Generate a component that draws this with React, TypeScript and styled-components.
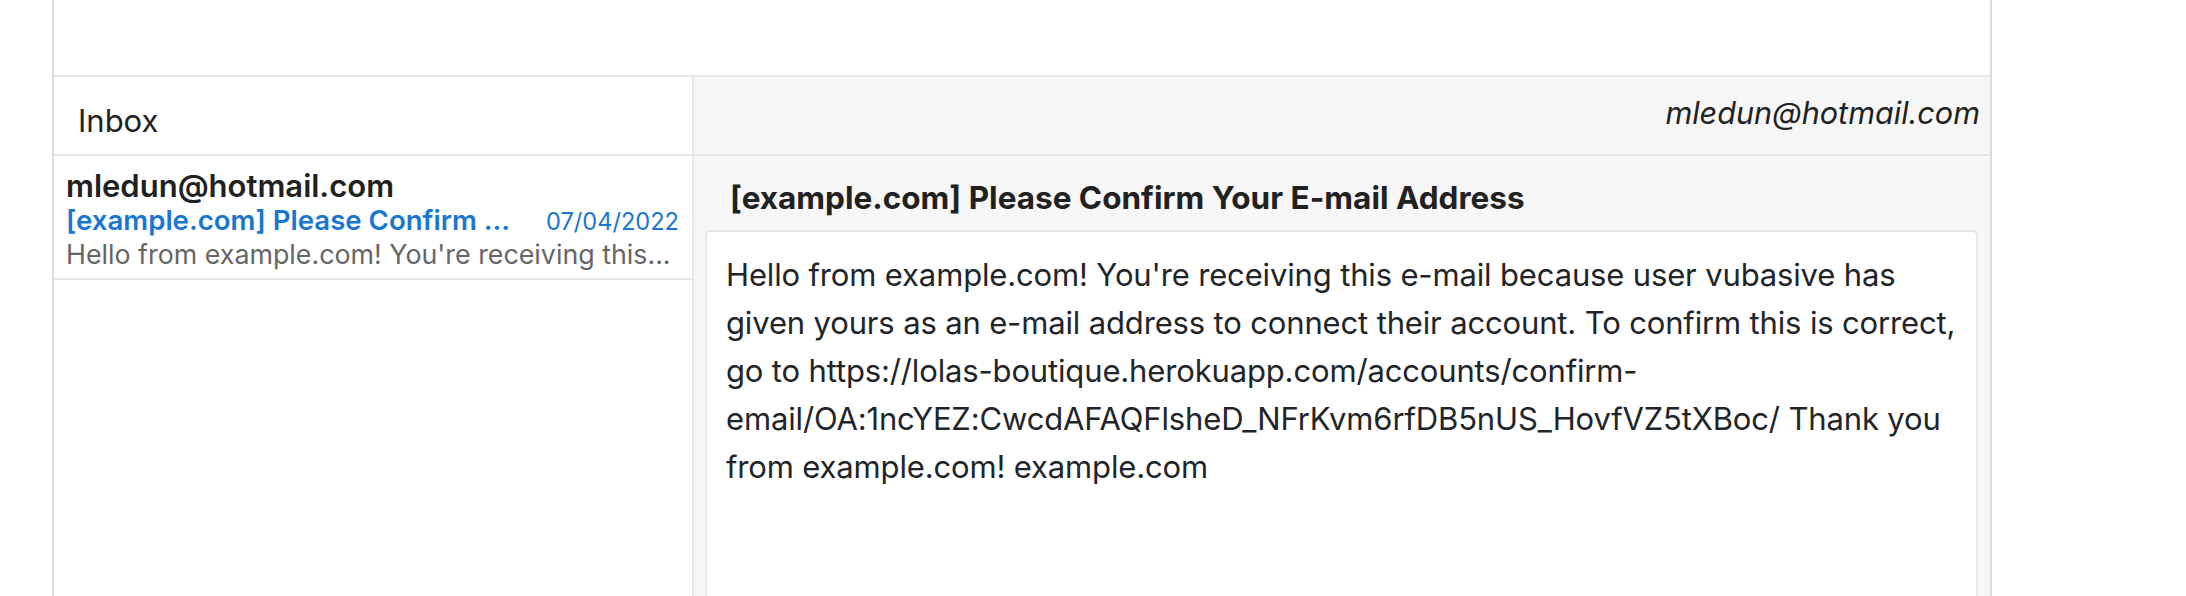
import React from "react";
import styled, { createGlobalStyle } from "styled-components";

const GlobalStyle = createGlobalStyle`
  html, body {
    margin: 0;
    padding: 0;
    height: 100%;
    overflow: hidden;
    background: #ffffff;
  }
  body {
    font-family: Inter, "Liberation Sans", Arial, sans-serif;
    color: #212529;
  }
  * { box-sizing: border-box; }
`;

const Page = styled.div`
  padding-left: 52px;
  height: 596px;
`;

const Frame = styled.div`
  width: 1940px;
  height: 100%;
  border-left: 2px solid #dcdcdc;
  border-right: 2px solid #dcdcdc;
  display: flex;
  flex-direction: column;
`;

const TopBar = styled.div`
  height: 77px;
  flex: none;
  border-bottom: 2px solid #e7e7e7;
  background: #ffffff;
`;

const Main = styled.div`
  flex: 1;
  display: grid;
  grid-template-columns: 640px 1fr;
  min-height: 0;
`;

const Column = styled.div<{ $tinted?: boolean; $divider?: boolean }>`
  display: flex;
  flex-direction: column;
  min-width: 0;
  background: ${(p) => (p.$tinted ? "#f7f7f7" : "#ffffff")};
  border-right: ${(p) => (p.$divider ? "2px solid #e7e7e7" : "none")};
`;

const PaneHeader = styled.div<{ $align: "left" | "right"; $top: number }>`
  height: 79px;
  flex: none;
  border-bottom: 2px solid #e7e7e7;
  display: flex;
  justify-content: ${(p) => (p.$align === "right" ? "flex-end" : "flex-start")};
  align-items: flex-start;
  padding: ${(p) => p.$top}px 10px 0 24px;
`;

const HeaderTitle = styled.span`
  font-size: 31px;
  line-height: 40px;
  color: #222222;
`;

const HeaderUser = styled.span`
  font-size: 30.6px;
  line-height: 40px;
  font-style: italic;
  color: #222222;
`;

const MessageItem = styled.div`
  padding: 12px 13px 8px 12px;
  border-bottom: 2px solid #e7e7e7;
  display: flex;
  flex-direction: column;
`;

const Sender = styled.div`
  font-size: 31px;
  line-height: 36px;
  font-weight: 600;
  color: #212121;
  white-space: nowrap;
`;

const SubjectRow = styled.div`
  display: flex;
  justify-content: space-between;
  align-items: baseline;
  gap: 20px;
`;

const Subject = styled.span`
  font-size: 27.6px;
  line-height: 32px;
  font-weight: 600;
  color: #1976d2;
  white-space: nowrap;
`;

const DateText = styled.span`
  font-size: 23.6px;
  line-height: 32px;
  color: #1976d2;
  white-space: nowrap;
`;

const Preview = styled.div`
  font-size: 26.8px;
  line-height: 32px;
  color: #666666;
  white-space: nowrap;
  overflow: hidden;
  text-overflow: ellipsis;
`;

const Reader = styled.div`
  flex: 1;
  padding: 22px 12px 0 11px;
  display: flex;
  flex-direction: column;
  min-height: 0;
`;

const ReaderSubject = styled.h2`
  margin: 0 0 12px 25px;
  font-size: 31.5px;
  line-height: 40px;
  font-weight: 700;
  color: #212121;
`;

const BodyCard = styled.div`
  flex: 1;
  background: #ffffff;
  border: 2px solid #e7e7e7;
  border-bottom: none;
  border-radius: 5px 5px 0 0;
  padding: 19px 12px 0 19px;
  font-size: 31px;
  line-height: 48px;
  letter-spacing: -0.15px;
  color: #212529;
  overflow-wrap: break-word;
`;

export default function App() {
  return (
    <>
      <GlobalStyle />
      <Page>
        <Frame>
          <TopBar />
          <Main>
            <Column $divider>
              <PaneHeader $align="left" $top={24}>
                <HeaderTitle>Inbox</HeaderTitle>
              </PaneHeader>
              <MessageItem>
                <Sender>mledun@hotmail.com</Sender>
                <SubjectRow>
                  <Subject>[example.com] Please Confirm ...</Subject>
                  <DateText>07/04/2022</DateText>
                </SubjectRow>
                <Preview>Hello from example.com! You're receiving this...</Preview>
              </MessageItem>
            </Column>
            <Column $tinted>
              <PaneHeader $align="right" $top={16}>
                <HeaderUser>mledun@hotmail.com</HeaderUser>
              </PaneHeader>
              <Reader>
                <ReaderSubject>[example.com] Please Confirm Your E-mail Address</ReaderSubject>
                <BodyCard>
                  Hello from example.com! You're receiving this e-mail because user vubasive has given
                  yours as an e-mail address to connect their account. To confirm this is correct, go to
                  https://lolas-boutique.herokuapp.com/accounts/confirm-email/OA:1ncYEZ:CwcdAFAQFlsheD_NFrKvm6rfDB5nUS_HovfVZ5tXBoc/
                  Thank you from example.com! example.com
                </BodyCard>
              </Reader>
            </Column>
          </Main>
        </Frame>
      </Page>
    </>
  );
}
